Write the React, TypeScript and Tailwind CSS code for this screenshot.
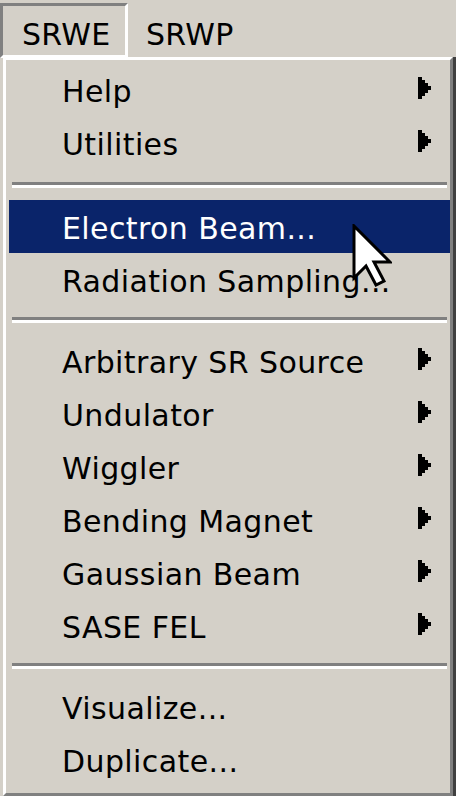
import React from "react";

const Arrow = () => (
  <svg width="14" height="22" viewBox="0 0 14 22" className="block">
    <polygon points="0,0 4,0 4,3 7,3 7,6 10,6 10,9 13,9 13,13 10,13 10,16 7,16 7,19 4,19 4,22 0,22" fill="#000" />
  </svg>
);

type Item = { label: string; sub?: boolean; active?: boolean } | "sep";

const items: Item[] = [
  { label: "Help", sub: true },
  { label: "Utilities", sub: true },
  "sep",
  { label: "Electron Beam...", active: true },
  { label: "Radiation Sampling..." },
  "sep",
  { label: "Arbitrary SR Source", sub: true },
  { label: "Undulator", sub: true },
  { label: "Wiggler", sub: true },
  { label: "Bending Magnet", sub: true },
  { label: "Gaussian Beam", sub: true },
  { label: "SASE FEL", sub: true },
  "sep",
  { label: "Visualize..." },
  { label: "Duplicate..." },
];

export default function App() {
  let sepIndex = 0;
  return (
    <div className="relative w-[456px] h-[796px] overflow-hidden bg-[#d4d0c8] text-black font-['DejaVu_Sans',sans-serif] text-[30px]">
      {/* Menu bar */}
      <div className="h-[57px] pt-[3px] flex items-start">
        <div className="w-[128px] h-[55px] border-[3px] border-t-[#808080] border-l-[#808080] border-r-white border-b-white pl-[19px] pt-[14px] leading-none tracking-[0.3px]">
          SRWE
        </div>
        <div className="ml-[18px] pt-[17px] leading-none tracking-[0.3px]">SRWP</div>
      </div>
      {/* Popup menu */}
      <div className="h-[739px] pl-[3px] border-r-[3px] border-r-[#404040]">
        <div className="h-full border-[3px] border-t-white border-l-white border-r-[#808080] border-b-[#808080] p-[3px] pr-0 flex flex-col">
          {items.map((it, i) => {
            if (it === "sep") {
              const h = sepIndex === 0 ? "h-[31px]" : "h-[28px]";
              sepIndex++;
              return (
                <div key={i} className={`${h} flex flex-col justify-center px-[3px]`}>
                  <div className="h-[3px] bg-[#808080]" />
                  <div className="h-[3px] bg-white" />
                </div>
              );
            }
            return (
              <div
                key={i}
                className={`h-[53px] shrink-0 flex items-center pl-[53px] pr-[18px] pt-[5px] ${
                  it.active ? "bg-[#0a246a] text-white" : ""
                }`}
              >
                <span className="leading-none whitespace-nowrap tracking-[0.4px]">{it.label}</span>
                {it.sub && (
                  <span className="ml-auto -mt-[8px]">
                    <Arrow />
                  </span>
                )}
              </div>
            );
          })}
        </div>
      </div>
      {/* Mouse cursor */}
      <svg
        className="absolute left-[352px] top-[224px]"
        width="40"
        height="64"
        viewBox="0 0 40 64"
      >
        <polygon
          points="2,2 2,54 14,42 24,61 32,57 22,38 38,38"
          fill="#fff"
          stroke="#000"
          strokeWidth="3"
          strokeLinejoin="miter"
        />
      </svg>
    </div>
  );
}
